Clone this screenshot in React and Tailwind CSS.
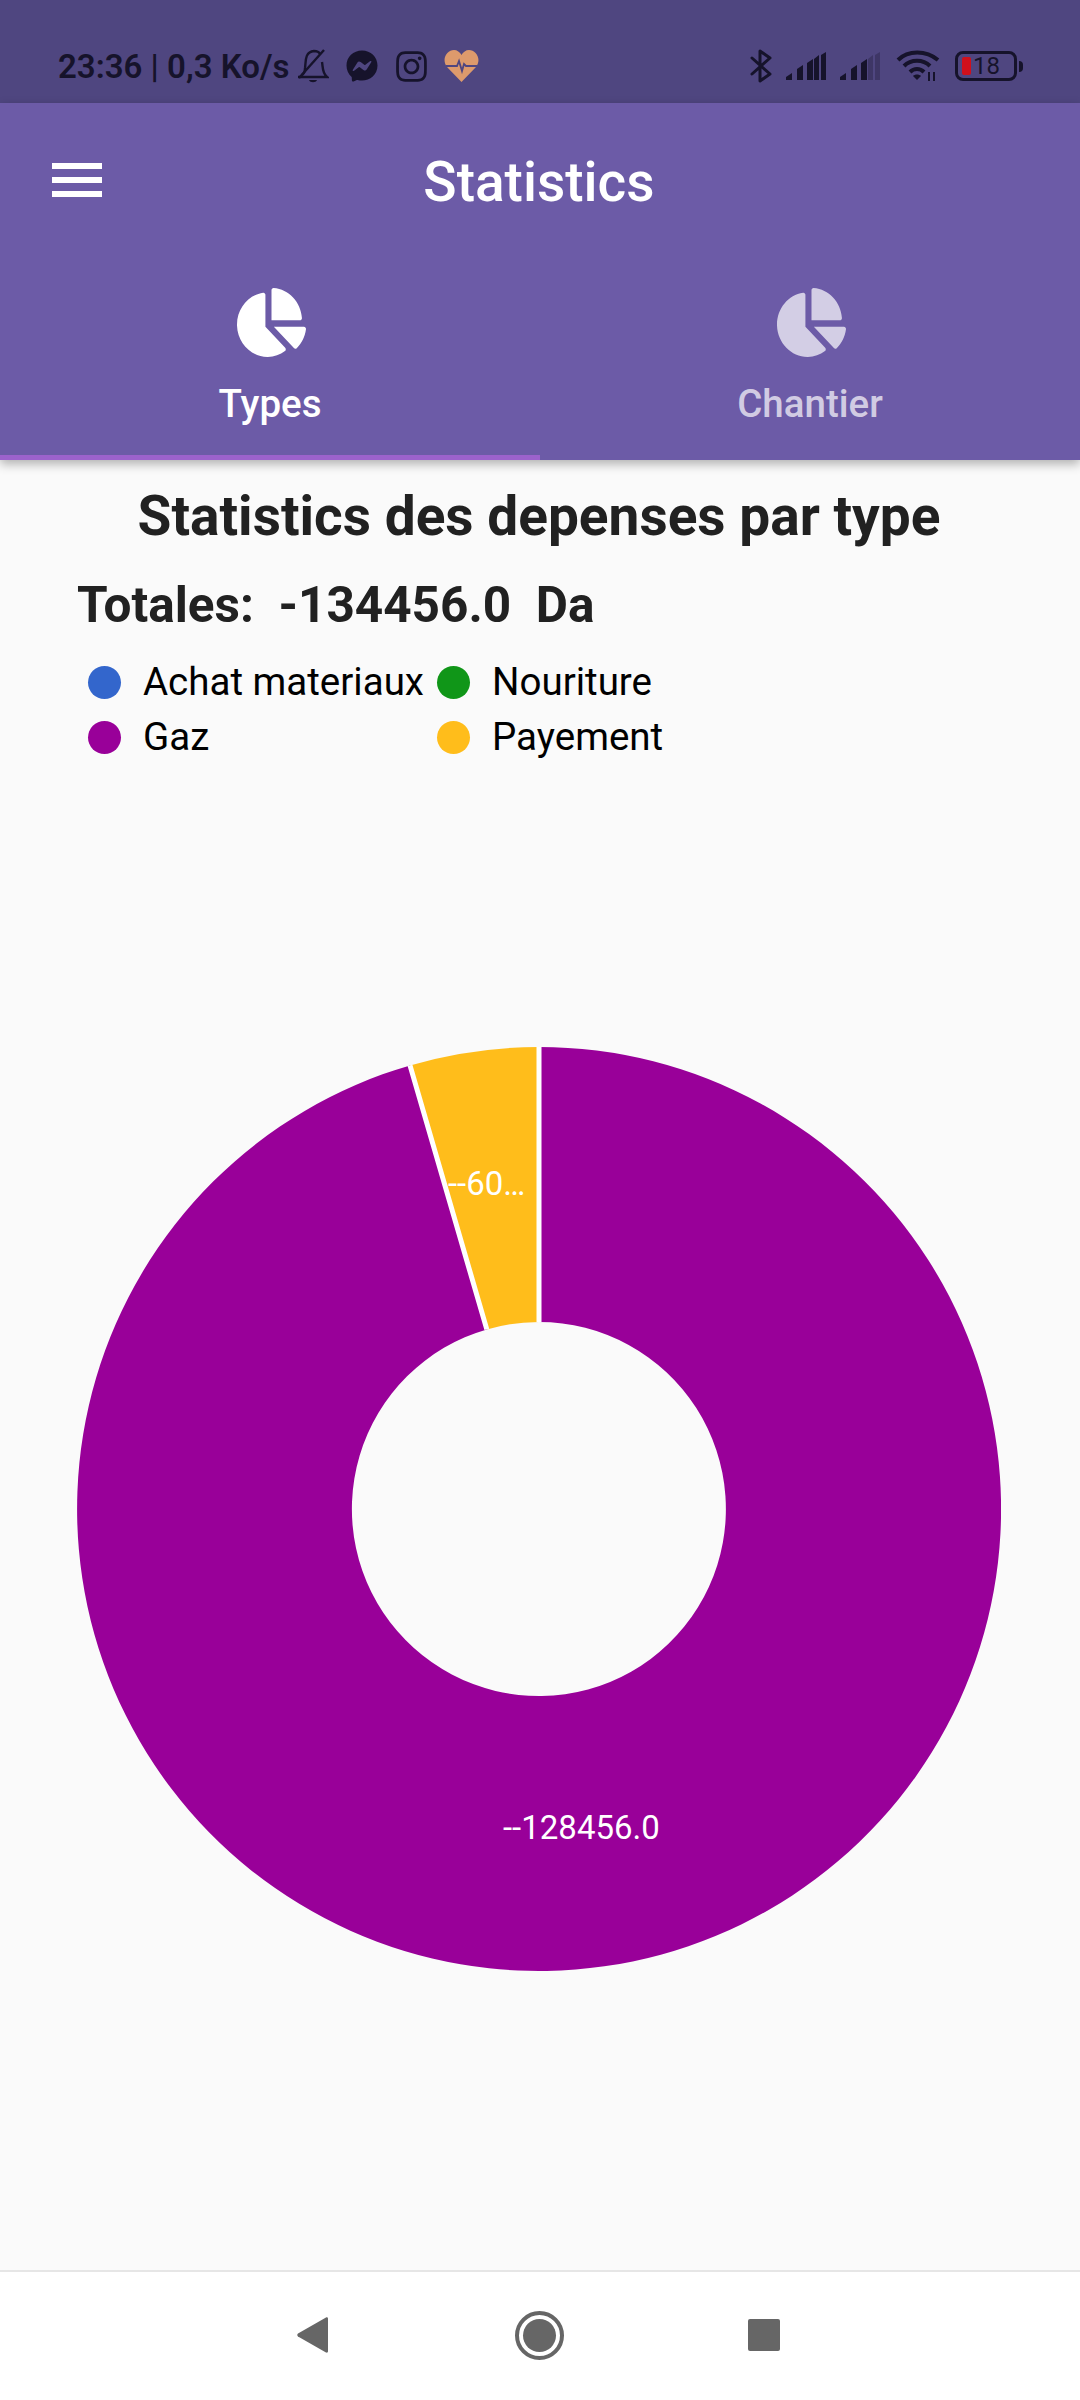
import { FaChartPie, FaFacebookMessenger, FaInstagram } from "react-icons/fa";

const legend = [
  { label: "Achat materiaux", color: "bg-[#3366cc]" },
  { label: "Nouriture", color: "bg-[#109618]" },
  { label: "Gaz", color: "bg-[#990099]" },
  { label: "Payement", color: "bg-[#ffbd1b]" },
];

function Signal({ faded }) {
  const bars = [
    "M0 25 L6 21 V28 H0 Z",
    "M11 17 L17 13 V28 H11 Z",
    "M21 11 L27 7 V28 H21 Z",
    "M28 7 L33 3 V28 H28 Z",
    "M35 3 L40 0 V28 H35 Z",
  ];
  return (
    <svg width="40" height="28" viewBox="0 0 40 28" fill="#16132b">
      {bars.map((d, i) => (
        <path key={d} d={d} opacity={faded && i > 2 ? 0.3 : 1} />
      ))}
    </svg>
  );
}

function StatusBar() {
  return (
    <div className="h-[103px] bg-[#4f4680] flex items-center pt-[29px] pl-[58px] pr-[57px] text-[#16132b] shrink-0">
      <span className="text-[33px] font-semibold leading-none whitespace-nowrap">23:36 | 0,3 Ko/s</span>
      {/* muted bell */}
      <svg className="ml-[8px]" width="32" height="34" viewBox="0 0 32 34" fill="none" stroke="#16132b" strokeWidth="2.4">
        <path d="M1 28 H30 C25 24 26 18 25 13 M8 19 C9 14 7 3 17 2 C20 2 22 3 23 5 M5 26 C8 24 8 22 8 19" />
        <path d="M2 29 L27 1" />
        <path d="M12 31 H20 C19 34 13 34 12 31 Z" fill="#16132b" stroke="none" />
      </svg>
      <FaFacebookMessenger className="ml-[17px] text-[#16132b]" size={32} />
      <FaInstagram className="ml-[16px] text-[#16132b]" size={35} />
      <svg className="ml-[15px]" width="35" height="32" viewBox="0 0 35 32">
        <path d="M17.5 32 L3 17 C-3 9 3 0 10 0 C13 0 16 2 17.5 5 C19 2 22 0 25 0 C32 0 38 9 32 17 Z" fill="#dd9a6c" />
        <path d="M2 16 H13 L15 11 L18 21 L20 14 L22 16 H33" fill="none" stroke="#4f4680" strokeWidth="1.8" />
      </svg>

      <div className="ml-auto flex items-center">
        <svg width="22" height="34" viewBox="0 0 22 34" fill="none" stroke="#16132b" strokeWidth="3" strokeLinejoin="round" strokeLinecap="round">
          <path d="M2 9 L20 25 L10 32 V2 L20 9 L2 25" />
        </svg>
        <div className="ml-[14px]"><Signal /></div>
        <div className="ml-[14px]"><Signal faded /></div>
        <svg className="ml-[16px]" width="44" height="32" viewBox="0 0 44 32" fill="none" stroke="#16132b" strokeWidth="4">
          <path d="M2 10 C12 0 30 0 42 10" />
          <path d="M8 16 C15 9 27 9 34 16" />
          <path d="M14 22 C18 18 24 18 28 22" />
          <path d="M17 26 L21 30 L25 26 C23 24 19 24 17 26 Z" fill="#16132b" stroke="none" />
          <path d="M33 22 V31 M38 31 V22" strokeWidth="2" />
        </svg>
        <div className="ml-[15px] flex items-center">
          <div className="w-[62px] h-[30px] rounded-[8px] border-[3px] border-[#16132b] flex items-center pl-[4px] gap-[2px]">
            <div className="w-[9px] h-[18px] bg-[#d0101c] rounded-[2px]" />
            <span className="text-[24px] leading-none font-normal">18</span>
          </div>
          <div className="ml-[2px] w-[4px] h-[11px] bg-[#16132b] rounded-r-full" />
        </div>
      </div>
    </div>
  );
}

function Tab({ label, active }) {
  return (
    <div
      className={`flex-1 flex flex-col items-center pt-[31px] border-b-[5px] ${
        active ? "border-[#9c62cc] text-white" : "border-transparent text-white/70"
      }`}
    >
      <FaChartPie preserveAspectRatio="none" className="w-[69px] h-[69px] ml-[2px]" />
      <span className="mt-[24px] text-[38.5px] font-medium leading-[46px]">{label}</span>
    </div>
  );
}

function AppBar() {
  return (
    <div className="bg-[#6c5ba7] shrink-0 relative z-10 shadow-[0_4px_10px_rgba(0,0,0,0.3)]">
      <div className="h-[154px] relative flex items-center justify-center pt-[4px]">
        <div className="absolute left-[52px] top-[60px] w-[50px] flex flex-col gap-[8px]">
          <div className="h-[6px] bg-white" />
          <div className="h-[6px] bg-white" />
          <div className="h-[6px] bg-white" />
        </div>
        <span className="text-[55px] font-medium text-white leading-none ml-[-2px]">Statistics</span>
      </div>
      <div className="flex h-[203px]">
        <Tab label="Types" active />
        <Tab label="Chantier" />
      </div>
    </div>
  );
}

function Donut() {
  return (
    <div className="relative w-[924px] h-[924px] ml-[77px] mt-[282px]">
      <svg width="924" height="924" viewBox="0 0 924 924">
        <path d="M462 0 A462 462 0 1 1 333 18.4 L409.8 282.4 A187 187 0 1 0 462 275 Z" fill="#990099" />
        <path d="M333 18.4 A462 462 0 0 1 462 0 L462 275 A187 187 0 0 0 409.8 282.4 Z" fill="#ffbd1b" />
        <path d="M462 0 V275 M333 18.4 L409.8 282.4" stroke="#ffffff" strokeWidth="5" />
      </svg>
      <span className="absolute left-[371px] top-[117px] text-[33px] text-white leading-[40px]">--60…</span>
      <span className="absolute left-[426px] top-[761px] text-[33px] text-white leading-[40px]">--128456.0</span>
    </div>
  );
}

function BottomNav() {
  return (
    <div className="h-[130px] shrink-0 bg-white border-t-2 border-[#e6e6e6] flex items-center pl-[297px] pb-[2px]">
      <svg width="31" height="36" viewBox="0 0 31 36" fill="#666666">
        <path d="M29 0.5 C30.3 0 31 0.8 31 2 V34 C31 35.2 30.3 36 29 35.5 L1 19.5 C0 18.8 0 17.2 1 16.5 Z" />
      </svg>
      <div className="ml-[187px] w-[49px] h-[49px] rounded-full border-[4px] border-[#666666] flex items-center justify-center">
        <div className="w-[33px] h-[33px] rounded-full bg-[#666666]" />
      </div>
      <div className="ml-[184px] w-[32px] h-[32px] rounded-[2px] bg-[#666666]" />
    </div>
  );
}

export default function App() {
  return (
    <div className="w-[1080px] h-[2400px] flex flex-col overflow-hidden bg-[#fafafa] font-['Roboto',sans-serif]">
      <StatusBar />
      <AppBar />
      <main className="flex-1 min-h-0">
        <h1 className="mt-[24px] text-center text-[55px] font-bold leading-[64px] text-[#212121] pr-[2px]">
          Statistics des depenses par type
        </h1>
        <p className="mt-[27px] ml-[77px] text-[49.5px] font-bold leading-[60px] text-[#212121] whitespace-pre">
          Totales:  -134456.0  Da
        </p>
        <div className="mt-[20px] ml-[88px] grid grid-cols-[349px_1fr] auto-rows-[55px] text-[38.5px] text-black">
          {legend.map((item) => (
            <div key={item.label} className="flex items-center gap-[22px]">
              <div className={`w-[33px] h-[33px] rounded-full ${item.color}`} />
              <span className="leading-none whitespace-nowrap">{item.label}</span>
            </div>
          ))}
        </div>
        <Donut />
      </main>
      <BottomNav />
    </div>
  );
}
